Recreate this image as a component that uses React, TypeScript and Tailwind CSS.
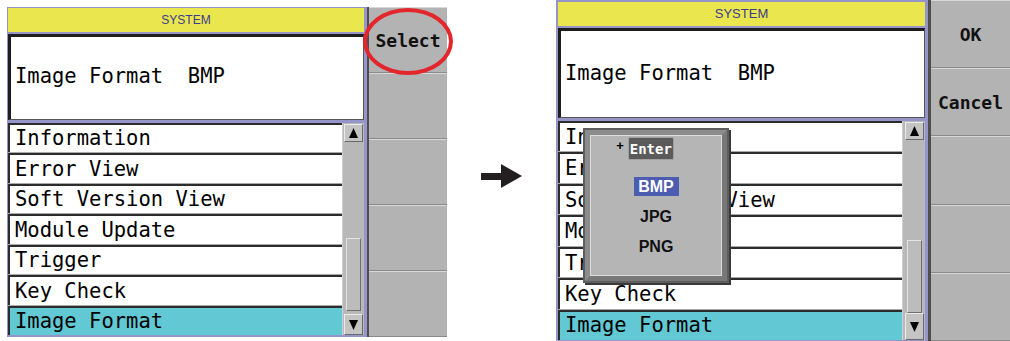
import React from 'react';

type Variant = 'left' | 'right';

const items = ['Information', 'Error View', 'Soft Version View', 'Module Update', 'Trigger', 'Key Check', 'Image Format'];

// literal class sets for the two screenshots (they are scaled slightly differently)
const sizes = {
  left: {
    outer: 'w-[440px] h-[330px]',
    main: 'w-[356px] my-px ml-px mr-[3px]',
    header: 'h-[24px] text-[12px]',
    info: 'h-[86px] mt-[2px] pb-[4px]',
    list: 'h-[212px] mt-[3px]',
    scroll: 'w-[22px]',
    thumb: 'h-[73px] mb-[3px]',
    down: 'h-[21px]',
    panel: 'w-[80px] border-l-2',
  },
  right: {
    outer: 'w-[454px] h-[341px]',
    main: 'w-[367px] mt-[2px] mb-px ml-[2px] mr-[3px]',
    header: 'h-[24px] text-[13px]',
    info: 'h-[90px] mt-[2px] pb-[2px]',
    list: 'h-[219px] mt-[3px]',
    scroll: 'w-[23px]',
    thumb: 'h-[73px] mb-0',
    down: 'h-[27px]',
    panel: 'w-[82px] border-l-[3px]',
  },
};

const mono = 'font-["DejaVu_Sans_Mono",monospace]';

const Triangle: React.FC<{ down?: boolean }> = ({ down }) => (
  <svg width="9" height="10" viewBox="0 0 9 10">
    <polygon points={down ? '0,0 9,0 4.5,10' : '4.5,0 9,10 0,10'} fill="#000" />
  </svg>
);

const ScrollButton: React.FC<{ down?: boolean; className: string }> = ({ down, className }) => (
  <div
    className={`w-[19px] flex items-center justify-center bg-[#c4c4c4] border-t border-l border-[#ececec] border-r border-b border-r-[#6a6a6a] border-b-[#6a6a6a] ${className}`}
  >
    <Triangle down={down} />
  </div>
);

const Screen: React.FC<{ variant: Variant; buttons: string[]; children?: React.ReactNode }> = ({
  variant,
  buttons,
  children,
}) => {
  const s = sizes[variant];
  return (
    <div className={`relative flex bg-[#9595c9] ${s.outer}`}>
      {/* Main column */}
      <div className={`flex flex-col ${s.main}`}>
        <div
          className={`flex items-center justify-center bg-[#eae64e] text-[#3b3b8f] font-["Liberation_Sans",sans-serif] ${s.header}`}
        >
          SYSTEM
        </div>
        <div
          className={`flex items-center bg-white pl-[4px] border-t-[3px] border-l-[3px] border-[#1e1e1e] border-r border-b border-r-[#555] border-b-[#555] ${s.info}`}
        >
          <span className={`${mono} text-[20.5px] text-black whitespace-pre`}>Image Format  BMP</span>
        </div>
        <div className={`flex bg-[#a9a9a9] ${s.list}`}>
          <div className="flex flex-col flex-1 gap-px">
            {items.map((item, i) => (
              <div
                key={item}
                className={`flex-1 flex items-center pl-[5px] border-t-2 border-l-2 border-[#2c2c2c] ${
                  i === items.length - 1 ? 'bg-[#62c8d4]' : 'bg-white'
                }`}
              >
                <span className={`${mono} text-[20.5px] text-black whitespace-pre leading-none`}>{item}</span>
              </div>
            ))}
          </div>
          {/* Scrollbar */}
          <div className={`flex flex-col items-center bg-[#b8b8b8] border-l border-[#d0d0d0] pt-px ${s.scroll}`}>
            <ScrollButton className="h-[18px]" />
            <div className="flex-1 flex flex-col justify-end">
              <div
                className={`w-[15px] bg-[#bcbcbc] border-t border-l border-[#e4e4e4] border-r border-b border-r-[#707070] border-b-[#707070] ${s.thumb}`}
              />
            </div>
            <ScrollButton down className={s.down} />
          </div>
        </div>
      </div>

      {/* Soft key panel */}
      <div className={`flex flex-col border-[#4e4e4e] bg-[#b3b3b3] ${s.panel}`}>
        {buttons.map((label, i) => (
          <div
            key={i}
            className="flex-1 flex items-center justify-center border-t border-[#d8d8d8] border-b border-b-[#8a8a8a]"
          >
            <span className={`${mono} font-bold text-[18px] text-[#111] whitespace-pre`}>{label}</span>
          </div>
        ))}
      </div>

      {children}
    </div>
  );
};

const FormatPopup: React.FC = () => (
  <div className="absolute left-[27px] top-[128px] w-[146px] h-[155px] bg-[#5e5e5e] p-[2px] shadow-[2px_2px_0_#3a3a3a]">
    <div className="w-full h-full border-[5px] border-t-[#8c8c8c] border-l-[#8c8c8c] border-r-[#787878] border-b-[#787878]">
      <div className="w-full h-full flex flex-col items-center bg-[#b5b5b5] border border-[#dcdcdc]">
        <div className="flex items-start mt-[1px] ml-[-22px]">
          <span className="font-['Liberation_Sans',sans-serif] font-bold text-[13px] leading-none mt-[2px] mr-[4px] text-black">
            +
          </span>
          <div className="w-[46px] h-[23px] flex items-center justify-center bg-[#5a5a5a] border border-[#a0a0a0] rounded-[2px]">
            <span className={`${mono} font-bold text-[14px] text-white leading-none`}>Enter</span>
          </div>
        </div>
        <div className="flex flex-col items-center mt-[17px] gap-[11px]">
          <div className="w-[45px] h-[19px] flex items-center justify-center bg-[#4c5cb0]">
            <span className="font-['Liberation_Sans',sans-serif] font-bold text-[16px] text-white leading-none">BMP</span>
          </div>
          <div className="h-[19px] flex items-center">
            <span className="font-['Liberation_Sans',sans-serif] font-bold text-[16px] text-[#111] leading-none">JPG</span>
          </div>
          <div className="h-[19px] flex items-center">
            <span className="font-['Liberation_Sans',sans-serif] font-bold text-[16px] text-[#111] leading-none">PNG</span>
          </div>
        </div>
      </div>
    </div>
  </div>
);

const App: React.FC = () => {
  return (
    <div className="w-[1010px] h-[341px] bg-white flex overflow-hidden">
      {/* Before */}
      <div className="ml-[7px] mt-[7px]">
        <Screen variant="left" buttons={['Select', '', '', '', '']}>
          <div className="absolute left-[356px] top-[1px] w-[90px] h-[67px] rounded-[50%] border-[4px] border-[#e3262b]" />
        </Screen>
      </div>

      {/* Arrow */}
      <div className="w-[109px] pl-[34px] pt-[164px]">
        <svg width="41" height="24" viewBox="0 0 41 24">
          <polygon points="0,9 20,9 20,0 41,12 20,24 20,16 0,16" fill="#231f20" />
        </svg>
      </div>

      {/* After */}
      <Screen variant="right" buttons={['OK', 'Cancel', '', '', '']}>
        <FormatPopup />
      </Screen>
    </div>
  );
};

export default App;
